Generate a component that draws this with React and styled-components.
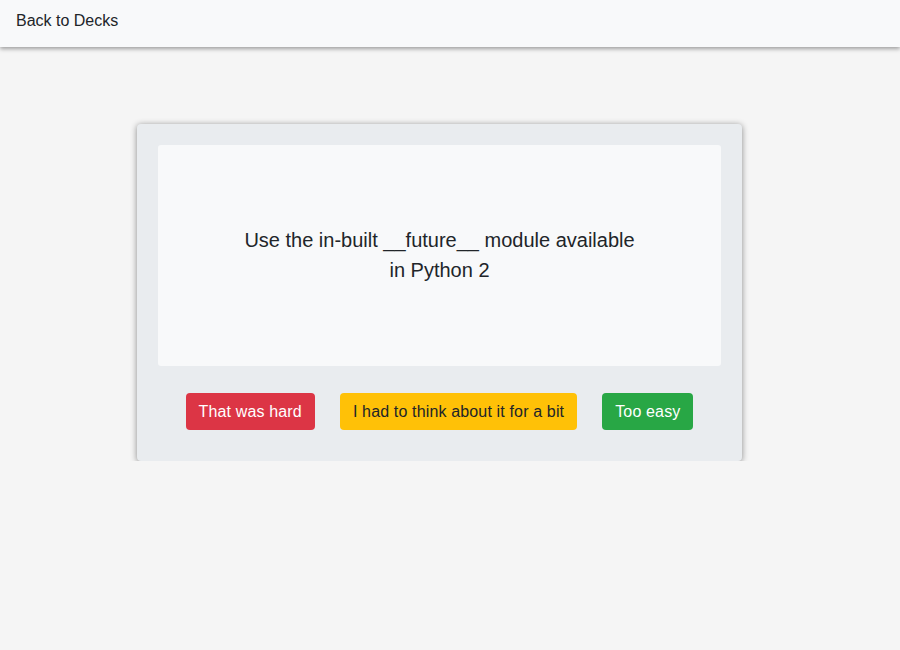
import styled, { createGlobalStyle } from "styled-components";

const GlobalStyle = createGlobalStyle`
  body {
    margin: 0;
    background: #f5f5f5;
    font-family: "Liberation Sans", Arial, sans-serif;
    color: #212529;
  }
`;

const Header = styled.header`
  height: 47px;
  box-sizing: border-box;
  display: flex;
  align-items: center;
  padding: 0 16px 6px;
  background: #f8f9fa;
  box-shadow: 0 2px 4px rgba(0, 0, 0, 0.35);
`;

const BackLink = styled.a`
  font-size: 16px;
  color: #212529;
  text-decoration: none;
  cursor: pointer;
`;

const Main = styled.main`
  display: flex;
  justify-content: center;
  padding: 77px 21px 0 0;
`;

const Card = styled.div`
  width: 563px;
  padding: 21px 21px 31px;
  background: #e9ecef;
  border-radius: 4px;
  box-shadow: 0 1px 6px rgba(0, 0, 0, 0.45);
`;

const Face = styled.div`
  height: 221px;
  display: flex;
  align-items: center;
  justify-content: center;
  background: #f8f9fa;
  border-radius: 3px;
`;

const Question = styled.p`
  margin: 0 0 1px;
  max-width: 410px;
  text-align: center;
  font-size: 20px;
  line-height: 30px;
`;

const Actions = styled.div`
  display: flex;
  justify-content: center;
  gap: 25px;
  margin-top: 27px;
`;

const colors = {
  danger: ["#dc3545", "#fff"],
  warning: ["#ffc107", "#212529"],
  success: ["#28a745", "#fff"],
};

const Button = styled.button`
  font-family: inherit;
  font-size: 16px;
  letter-spacing: 0.15px;
  line-height: 25px;
  padding: 6px 13px;
  border: none;
  border-radius: 4px;
  background: ${(p) => colors[p.$variant][0]};
  color: ${(p) => colors[p.$variant][1]};
  cursor: pointer;
`;

const App = () => {
  return (
    <>
      <GlobalStyle />
      <Header>
        <BackLink>Back to Decks</BackLink>
      </Header>
      <Main>
        <Card>
          <Face>
            <Question>Use the in-built __future__ module available in Python 2</Question>
          </Face>
          <Actions>
            <Button $variant="danger">That was hard</Button>
            <Button $variant="warning">I had to think about it for a bit</Button>
            <Button $variant="success">Too easy</Button>
          </Actions>
        </Card>
      </Main>
    </>
  );
};

export default App;
